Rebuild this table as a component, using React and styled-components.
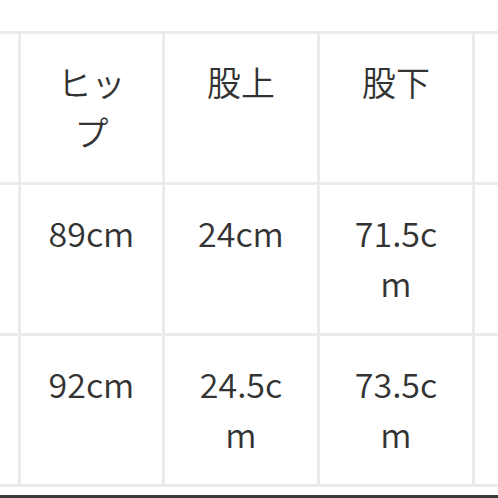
import { Fragment } from "react";
import styled, { createGlobalStyle } from "styled-components";

const GlobalStyle = createGlobalStyle`
    html, body {
        margin: 0;
        padding: 0;
        background: #ffffff;
    }
    body {
        width: 498px;
        height: 498px;
        overflow: hidden;
    }
`;

const Page = styled.div`
    display: flex;
    flex-direction: column;
    width: 498px;
    height: 498px;
    padding-top: 31px;
    box-sizing: border-box;
    background: #ffffff;
    font-family: "Noto Sans CJK JP", "Noto Sans", sans-serif;
    color: #333333;
    overflow: hidden;
`;

const SizeTable = styled.div`
    display: grid;
    grid-template-columns: 18px 141px 152px 152px minmax(0, 1fr);
    grid-auto-rows: 148px;
    gap: 3px;
    padding: 3px 0;
    background: #ebebeb;
`;

const Cell = styled.div`
    min-width: 0;
    background: #ffffff;
    padding: ${({ $edge }) => ($edge ? "0" : "23px 24px 0")};
    font-size: 34px;
    font-weight: 350;
    line-height: 50px;
    text-align: center;
    word-break: break-all;
    overflow: hidden;
`;

const Spacer = styled.div`
    flex: 1;
`;

const BottomBar = styled.div`
    height: 3px;
    background: #3a3a3a;
`;

const rows = [
    ["ヒップ", "股上", "股下"],
    ["89cm", "24cm", "71.5cm"],
    ["92cm", "24.5cm", "73.5cm"],
];

export default function App() {
    return (
        <>
            <GlobalStyle />
            <Page>
                <SizeTable>
                    {rows.map((row, r) => (
                        <Fragment key={`row_${r}`}>
                            <Cell $edge />
                            {row.map((text, i) => (
                                <Cell key={`c_${r}_${i}`}>{text}</Cell>
                            ))}
                            <Cell $edge />
                        </Fragment>
                    ))}
                </SizeTable>
                <Spacer />
                <BottomBar />
            </Page>
        </>
    );
}
